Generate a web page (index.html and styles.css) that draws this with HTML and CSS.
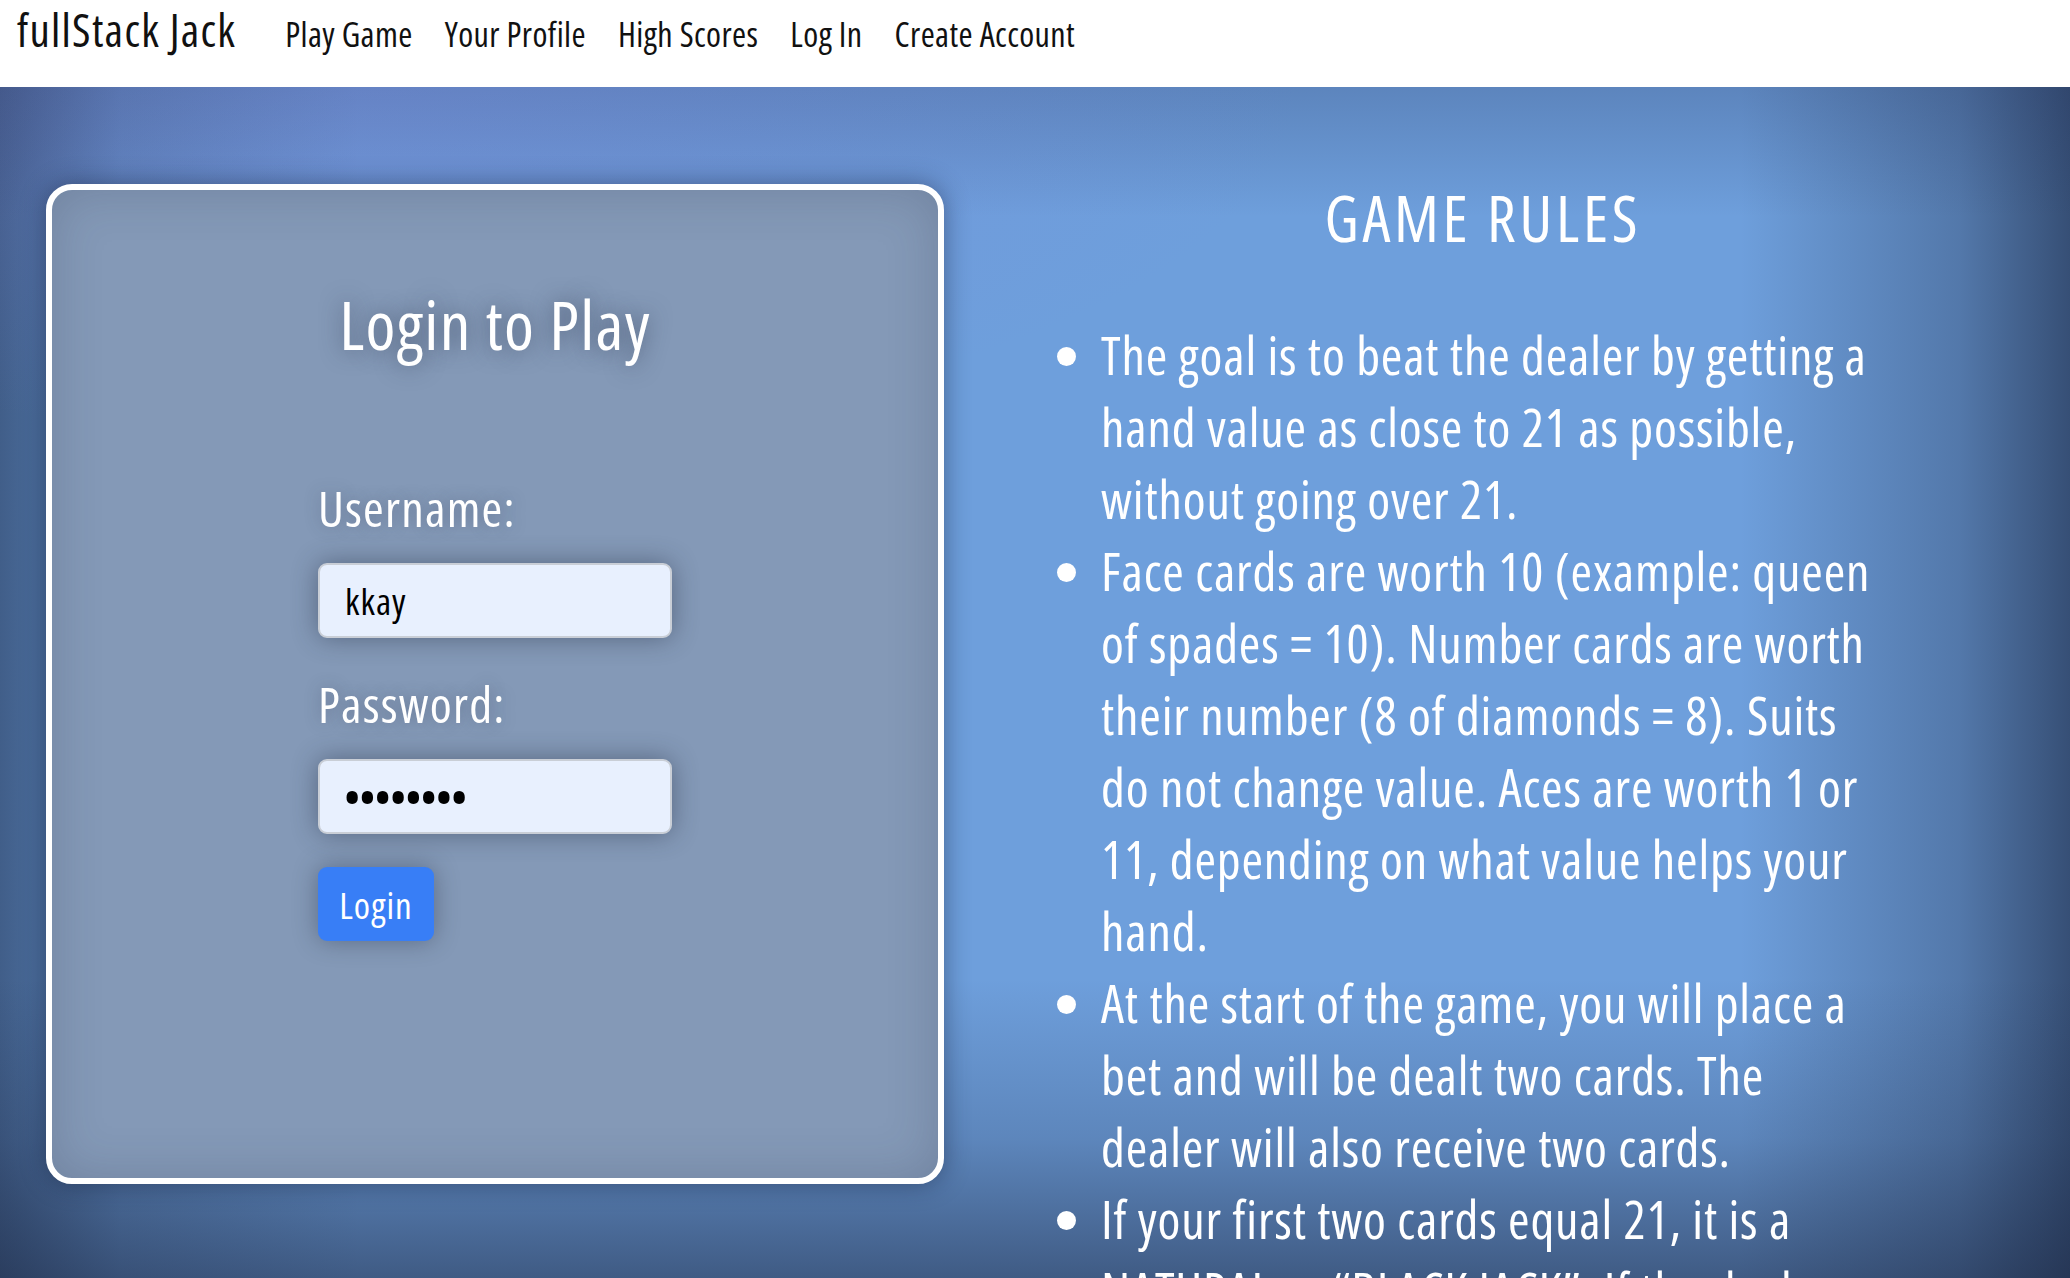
FILE: index.html
```html
<!DOCTYPE html>
<html lang="en">
<head>
<meta charset="utf-8">
<title>fullStack Jack</title>
<link rel="stylesheet" href="styles.css">
</head>
<body>
<nav class="navbar">
  <a class="brand" href="#">fullStack Jack</a>
  <ul class="nav-links">
    <li><a href="#">Play Game</a></li>
    <li><a href="#">Your Profile</a></li>
    <li><a href="#">High Scores</a></li>
    <li><a href="#">Log In</a></li>
    <li><a href="#">Create Account</a></li>
  </ul>
</nav>
<main class="page">
  <section class="login-card">
    <h2 class="login-title">Login to Play</h2>
    <form class="login-form">
      <label class="field-label" for="username">Username:</label>
      <input class="field-input" id="username" type="text" value="kkay">
      <label class="field-label" for="password">Password:</label>
      <input class="field-input password" id="password" type="password" value="secret12">
      <button class="login-btn" type="button">Login</button>
    </form>
  </section>
  <section class="rules">
    <h2 class="rules-title">GAME RULES</h2>
    <ul class="rules-list">
      <li>The goal is to beat the dealer by getting a hand value as close to 21 as possible, without going over 21.</li>
      <li>Face cards are worth 10 (example: queen of spades = 10). Number cards are worth their number (8 of diamonds = 8). Suits do not change value. Aces are worth 1 or 11, depending on what value helps your hand.</li>
      <li>At the start of the game, you will place a bet and will be dealt two cards. The dealer will also receive two cards.</li>
      <li>If your first two cards equal 21, it is a NATURAL or “BLACK JACK”. If the dealer does not also have a natural, you win.</li>
    </ul>
  </section>
</main>
</body>
</html>
```
FILE: styles.css
```css
* {
  box-sizing: border-box;
}

html, body {
  margin: 0;
  padding: 0;
  height: 100%;
  overflow: hidden;
}

body {
  font-family: "Open Sans", "Noto Sans", sans-serif;
  font-stretch: 75%;
  font-weight: 400;
  background: #fff;
}

/* ---------- navbar ---------- */
.navbar {
  height: 87px;
  background: #fff;
  display: flex;
  align-items: baseline;
  padding: 0 0 0 17px;
}

.brand {
  font-size: 45px;
  letter-spacing: 1.3px;
  line-height: 60px;
  color: #111;
  text-decoration: none;
  margin-right: 33px;
}

.nav-links {
  list-style: none;
  margin: 0;
  padding: 0;
  display: flex;
  align-items: baseline;
}

.nav-links a {
  display: block;
  font-size: 34px;
  letter-spacing: 0.4px;
  line-height: 56px;
  color: #111;
  text-decoration: none;
  padding: 0 16px;
}

/* ---------- main area ---------- */
.page {
  height: 1191px;
  overflow: hidden;
  display: flex;
  align-items: flex-start;
  background:
    radial-gradient(ellipse 45% 30% at 18% 0%, rgba(125, 125, 215, 0.28), rgba(125, 125, 215, 0) 100%),
    linear-gradient(to bottom, rgba(30, 40, 80, 0.22) 0, rgba(30, 40, 80, 0) 130px),
    linear-gradient(to top, rgba(25, 35, 60, 0.55) 0, rgba(25, 35, 60, 0.2) 140px, rgba(25, 35, 60, 0) 300px),
    linear-gradient(to left, rgba(20, 30, 55, 0.62) 0, rgba(20, 30, 55, 0.3) 110px, rgba(20, 30, 55, 0) 330px),
    linear-gradient(to right, rgba(20, 30, 55, 0.5) 0, rgba(20, 30, 55, 0.18) 120px, rgba(20, 30, 55, 0) 360px),
    #6e9fdc;
}

/* ---------- login card ---------- */
.login-card {
  flex: 0 0 898px;
  height: 1000px;
  margin: 97px 0 0 46px;
  border: 6px solid #fff;
  border-radius: 26px;
  background: #8499b7;
  box-shadow:
    0 0 26px rgba(15, 25, 50, 0.45),
    inset 0 0 50px rgba(40, 50, 75, 0.22);
  padding: 94px 0 0 0;
}

.login-title {
  margin: 0;
  text-align: center;
  font-size: 68px;
  letter-spacing: 1.3px;
  line-height: 80px;
  font-weight: 400;
  color: #fff;
  text-shadow: 0 0 22px rgba(45, 55, 80, 0.65);
}

.login-form {
  width: 354px;
  margin: 112px 0 0 266px;
  display: flex;
  flex-direction: column;
  align-items: flex-start;
}

.field-label {
  font-size: 50px;
  letter-spacing: 1.2px;
  line-height: 64px;
  color: #fff;
  text-shadow: 0 0 16px rgba(45, 55, 80, 0.35);
  margin-bottom: 23px;
}

.field-input {
  width: 354px;
  height: 75px;
  margin: 0 0 34px 0;
  padding: 0 0 0 25px;
  background: #e8f0fe;
  border: 2px solid #c9ced6;
  border-radius: 9px;
  font-family: "Open Sans", "Noto Sans", sans-serif;
  font-stretch: 75%;
  font-weight: 400;
  font-size: 37px;
  letter-spacing: 1px;
  color: #000;
  box-shadow: 0 0 26px rgba(30, 40, 60, 0.45);
  outline: none;
}

.field-input.password {
  margin-bottom: 33px;
  font-stretch: 100%;
  font-size: 54px;
  letter-spacing: -5px;
  padding-left: 22px;
}

.login-btn {
  width: 116px;
  height: 74px;
  padding: 0;
  border: none;
  border-radius: 9px;
  background: #387ef6;
  color: #fff;
  font-family: "Open Sans", "Noto Sans", sans-serif;
  font-stretch: 75%;
  font-weight: 400;
  font-size: 37px;
  letter-spacing: 1px;
  box-shadow: 0 0 24px rgba(30, 40, 60, 0.4);
}

/* ---------- rules ---------- */
.rules {
  flex: 0 0 924px;
  margin: 93px 0 0 77px;
  color: #fff;
}

.rules-title {
  margin: 0;
  text-align: center;
  font-size: 63px;
  line-height: 76px;
  font-weight: 400;
  letter-spacing: 3.8px;
}

.rules-list {
  margin: 63px 0 0 0;
  padding: 0 65px 0 80px;
  font-size: 52px;
  letter-spacing: 0.85px;
  line-height: 72px;
}
```
